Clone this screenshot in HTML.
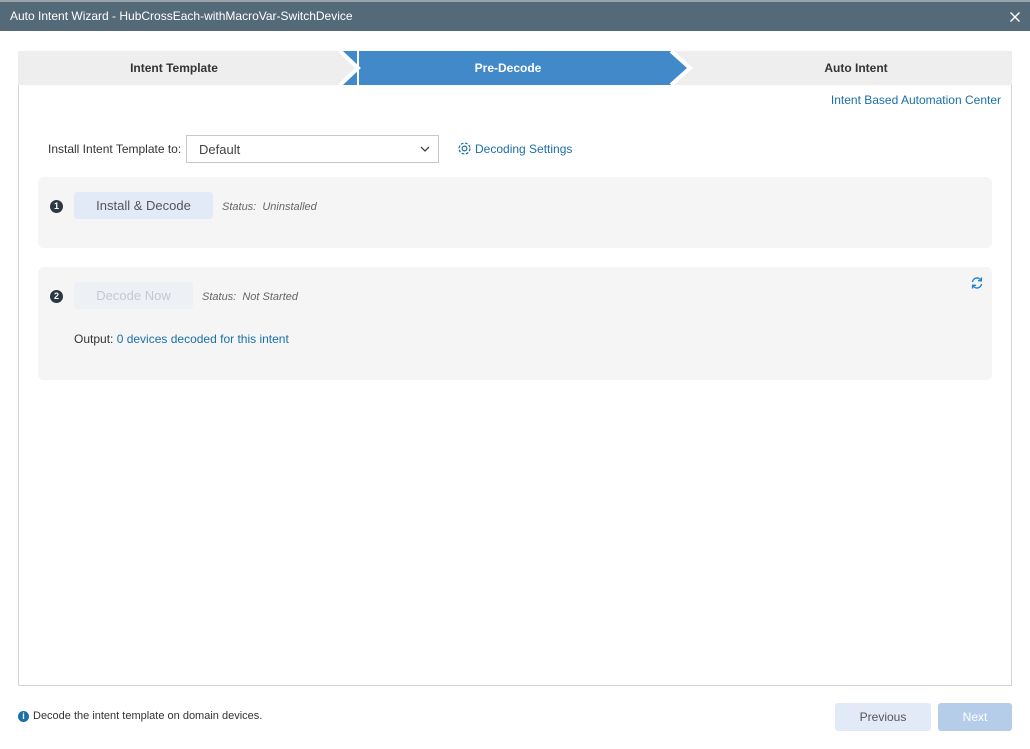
<!DOCTYPE html><html><head><style>
body{margin:0;width:1030px;height:749px;background:#fff;font-family:"Liberation Sans",sans-serif;position:relative;overflow:hidden;font-size:12px;color:#333}
.a{position:absolute}
.title{left:0;top:2px;width:1030px;height:29px;background:#556a78;color:#fff;font-size:12px;line-height:29px}
.lnk{color:#1a6fa8}
.card{background:#f5f5f5;border-radius:6px}
.num{width:13px;height:13px;border-radius:50%;background:#2b3742;color:#fff;font-size:9px;font-weight:bold;text-align:center;line-height:13px}
i{font-style:italic;color:#666;font-size:11px}
</style></head><body>
<div class="a" style="left:0;top:0;width:1030px;height:2px;background:#9aa3aa"></div>
<div class="a title"><span style="margin-left:10px">Auto Intent Wizard - HubCrossEach-withMacroVar-SwitchDevice</span><svg style="position:absolute;right:10px;top:10px" width="10" height="10"><path d="M0.5 0.5L9.5 9.5M9.5 0.5L0.5 9.5" stroke="#fff" stroke-width="1.4"/></svg></div>
<div class="a" style="left:18px;top:51px;width:992px;height:633px;border:1px solid #d4d4d4"></div>
<svg class="a" style="left:18px;top:51px" width="994" height="34">
<rect x="0" y="0" width="994" height="34" fill="#eeeeee"/>
<polygon points="322,0 653,0 672,17 653,34 322,34" fill="#4289c9"/>
<polygon points="322,0 340,17 322,34 318,34 318,0" fill="#eeeeee"/>
<polyline points="322,0 340,17 322,34" fill="none" stroke="#fff" stroke-width="4"/>
<polyline points="653,0 672,17 653,34" fill="none" stroke="#fff" stroke-width="4"/>
<rect x="339" y="0" width="2" height="34" fill="#fff"/>
<text x="156" y="21" font-size="12" font-weight="bold" text-anchor="middle" fill="#333" font-family="Liberation Sans">Intent Template</text>
<text x="490" y="21" font-size="12" font-weight="bold" text-anchor="middle" fill="#fff" font-family="Liberation Sans">Pre-Decode</text>
<text x="838" y="21" font-size="12" font-weight="bold" text-anchor="middle" fill="#333" font-family="Liberation Sans">Auto Intent</text>
</svg>
<div class="a lnk" style="right:29px;top:93px;font-size:12px">Intent Based Automation Center</div>
<div class="a" style="left:48px;top:142px">Install Intent Template to:</div>
<div class="a" style="left:186px;top:135px;width:251px;height:26px;border:1px solid #c8c8c8;background:#fff"><span style="position:absolute;left:12px;top:6px;font-size:13px;color:#444">Default</span><svg style="position:absolute;right:8px;top:10px" width="10" height="6"><polyline points="1,1 5,5 9,1" fill="none" stroke="#444" stroke-width="1.3"/></svg></div>
<svg class="a" style="left:457px;top:141px" width="15" height="15" viewBox="0 0 16 16"><circle cx="8" cy="8" r="2.5" fill="none" stroke="#1a6fa8" stroke-width="1.3"/><circle cx="8" cy="8" r="5.8" fill="none" stroke="#1a6fa8" stroke-width="1.3" stroke-dasharray="3 1.6"/></svg>
<div class="a lnk" style="left:475px;top:142px">Decoding Settings</div>
<div class="a card" style="left:38px;top:177px;width:954px;height:71px"></div>
<div class="a num" style="left:50px;top:200px">1</div>
<div class="a" style="left:74px;top:192px;width:139px;height:27px;background:#e3eaf7;border-radius:3px;text-align:center;line-height:27px;font-size:13px;color:#555">Install &amp; Decode</div>
<div class="a" style="left:222px;top:199px"><i>Status:&nbsp; Uninstalled</i></div>
<div class="a card" style="left:38px;top:267px;width:954px;height:113px"></div>
<div class="a num" style="left:50px;top:290px">2</div>
<div class="a" style="left:74px;top:282px;width:119px;height:27px;background:#edf0f5;border-radius:3px;text-align:center;line-height:27px;font-size:13px;color:#c5c9cf">Decode Now</div>
<div class="a" style="left:202px;top:289px"><i>Status:&nbsp; Not Started</i></div>
<svg class="a" style="left:970px;top:276px" width="14" height="14" viewBox="0 0 14 14"><path d="M2.5 6A4.5 4.5 0 0 1 11 4.5M11.5 8A4.5 4.5 0 0 1 3 9.5" fill="none" stroke="#1a7fd0" stroke-width="1.4"/><polyline points="11.5,1.5 11.3,4.8 8,4.6" fill="none" stroke="#1a7fd0" stroke-width="1.4"/><polyline points="2.5,12.5 2.7,9.2 6,9.4" fill="none" stroke="#1a7fd0" stroke-width="1.4"/></svg>
<div class="a" style="left:74px;top:332px">Output: <span class="lnk">0 devices decoded for this intent</span></div>
<div class="a" style="left:18px;top:711px;width:11px;height:11px;border-radius:50%;background:#1a6fa8;color:#fff;font-size:9px;font-weight:bold;text-align:center;line-height:11px">i</div>
<div class="a" style="left:33px;top:710px;font-size:11px">Decode the intent template on domain devices.</div>
<div class="a" style="left:835px;top:703px;width:96px;height:28px;background:#e3eaf7;border-radius:3px;text-align:center;line-height:28px;color:#555">Previous</div>
<div class="a" style="left:938px;top:703px;width:74px;height:28px;background:#b6cde9;border-radius:3px;text-align:center;line-height:28px;color:#fff">Next</div>
</body></html>
